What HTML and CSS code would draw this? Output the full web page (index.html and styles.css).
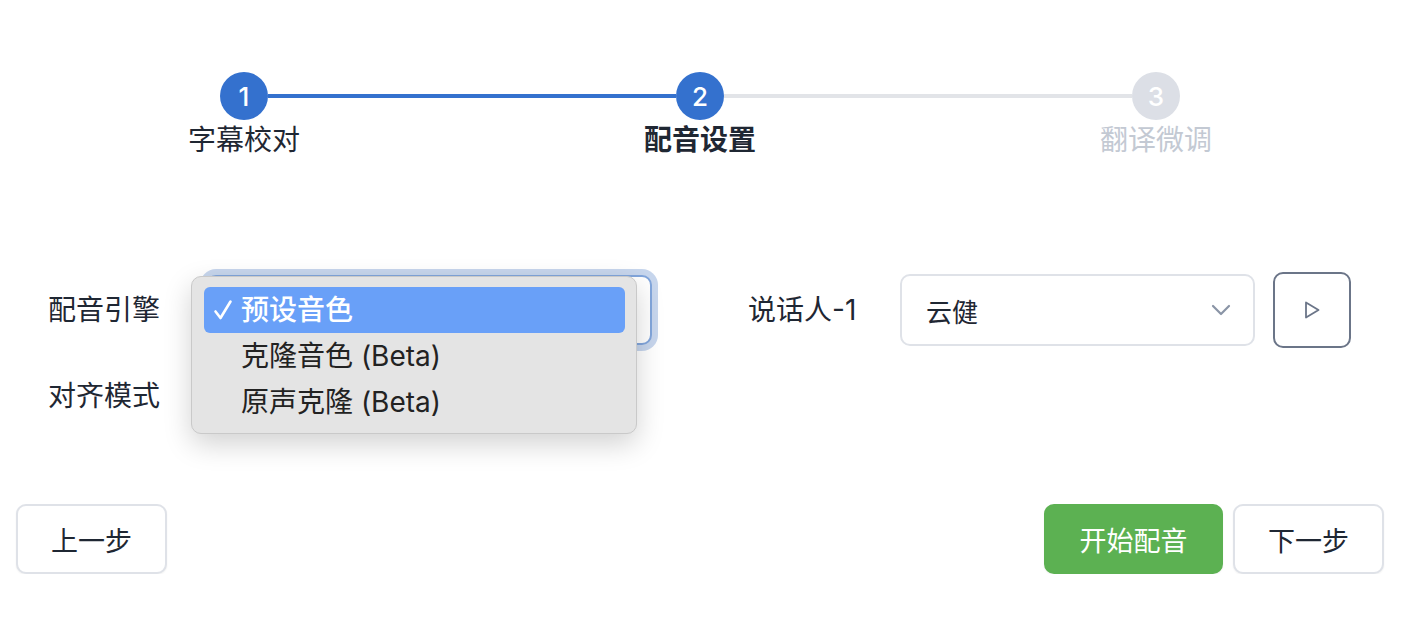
FILE: index.html
```html
<!DOCTYPE html>
<html lang="zh-CN">
<head>
<meta charset="utf-8">
<title>配音设置</title>
<link rel="stylesheet" href="styles.css">
</head>
<body>
<div class="page">
  <div class="stepper">
    <div class="track">
      <div class="dot done">1</div>
      <div class="line done"></div>
      <div class="dot done">2</div>
      <div class="line"></div>
      <div class="dot todo">3</div>
    </div>
    <div class="labels">
      <div class="label">字幕校对</div>
      <div class="label current">配音设置</div>
      <div class="label todo">翻译微调</div>
    </div>
  </div>

  <div class="form">
    <div class="row">
      <div class="field-label">配音引擎</div>
      <div class="select-wrap">
        <div class="select focused"></div>
        <div class="menu">
          <div class="item selected"><svg class="check" width="20" height="22" viewBox="0 0 20 22"><path d="M2.5 12.5 L7.5 19 L17.5 2.5" fill="none" stroke="#ffffff" stroke-width="2.6" stroke-linecap="round" stroke-linejoin="round"/></svg>预设音色</div>
          <div class="item">克隆音色 (Beta)</div>
          <div class="item">原声克隆 (Beta)</div>
        </div>
      </div>
      <div class="field-label speaker">说话人-1</div>
      <div class="select voice">
        <span>云健</span>
        <svg class="chev" width="20" height="12" viewBox="0 0 20 12"><path d="M2 2 L10 10 L18 2" fill="none" stroke="#8a94a6" stroke-width="2.2" stroke-linecap="round" stroke-linejoin="round"/></svg>
      </div>
      <button class="play" type="button">
        <svg width="18" height="20" viewBox="0 0 18 20"><path d="M3 2.5 L15.5 10 L3 17.5 Z" fill="none" stroke="#6b7588" stroke-width="1.8" stroke-linejoin="round"/></svg>
      </button>
    </div>
    <div class="row">
      <div class="field-label">对齐模式</div>
    </div>
  </div>

  <div class="actions">
    <button class="btn" type="button">上一步</button>
    <div class="right">
      <button class="btn primary" type="button">开始配音</button>
      <button class="btn" type="button">下一步</button>
    </div>
  </div>
</div>
</body>
</html>
```

FILE: styles.css
```css
* { box-sizing: border-box; }
body {
  margin: 0;
  background: #ffffff;
  font-family: "Inter", "Noto Sans CJK SC", sans-serif;
  color: #1f2733;
}
.page {
  padding: 0 28px 0 16px;
}
.stepper {
  padding-top: 72px;
}
.track {
  display: flex;
  align-items: center;
  margin: 0 204px;
}
.dot {
  width: 48px;
  height: 48px;
  border-radius: 50%;
  background: #3471ce;
  color: #fff;
  font-size: 26px;
  font-weight: 500;
  display: flex;
  align-items: center;
  justify-content: center;
  flex: none;
}
.dot.todo {
  background: #dcdfe6;
}
.line {
  flex: 1;
  height: 4px;
  background: #e2e4e8;
}
.line.done {
  background: #3471ce;
}
.labels {
  display: grid;
  grid-template-columns: repeat(3, 1fr);
  margin-top: 2px;
}
.label {
  text-align: center;
  font-size: 28px;
  line-height: 36px;
  color: #1f2733;
}
.label.current {
  font-weight: 700;
}
.label.todo {
  color: #c3c9d3;
}

.form {
  margin-top: 116px;
  padding-left: 32px;
}
.row {
  display: flex;
  align-items: center;
  height: 72px;
}
.row + .row {
  margin-top: 14px;
}
.field-label {
  width: 158px;
  font-size: 28px;
  line-height: 36px;
  flex: none;
}
.field-label.speaker {
  width: 152px;
  margin-left: 96px;
}
.select-wrap {
  position: relative;
  width: 446px;
  height: 72px;
}
.select {
  height: 72px;
  border: 2px solid #dfe2e8;
  border-radius: 10px;
  background: #fff;
}
.select.focused {
  height: 70px;
  margin-top: 1px;
  border-color: #82a6dc;
  box-shadow: 0 0 0 6px rgba(130, 164, 214, 0.45);
}
.select.voice {
  width: 355px;
  display: flex;
  align-items: center;
  justify-content: space-between;
  padding: 0 22px 0 24px;
  font-size: 26px;
}
.menu {
  position: absolute;
  left: -15px;
  top: 2px;
  width: 446px;
  height: 158px;
  padding: 10px 11px 10px 12px;
  background: #e4e4e4;
  border: 1px solid #c9c9c9;
  border-radius: 10px;
  box-shadow: 0 10px 28px rgba(0, 0, 0, 0.18);
}
.item {
  height: 46px;
  line-height: 46px;
  padding-left: 37px;
  font-size: 28px;
  color: #222;
  border-radius: 6px;
  position: relative;
}
.item.selected {
  background: #69a0f8;
  color: #fff;
  font-weight: 500;
}
.check {
  position: absolute;
  left: 9px;
  top: 12px;
}
.play {
  margin-left: 18px;
  width: 78px;
  height: 76px;
  border: 2px solid #6b7588;
  border-radius: 10px;
  background: #fff;
  display: flex;
  align-items: center;
  justify-content: center;
  padding: 0;
}

.actions {
  margin-top: 72px;
  display: flex;
  justify-content: space-between;
  align-items: center;
}
.right {
  display: flex;
  gap: 10px;
}
.btn {
  height: 70px;
  width: 151px;
  border: 2px solid #dfe2e8;
  border-radius: 10px;
  background: #fff;
  font-family: "Inter", "Noto Sans CJK SC", sans-serif;
  font-size: 27px;
  color: #1f2733;
  box-shadow: 0 1px 2px rgba(0, 0, 0, 0.06);
  padding: 0;
}
.btn.primary {
  width: 179px;
  background: #5cb152;
  border-color: #5cb152;
  color: #fff;
}
```
